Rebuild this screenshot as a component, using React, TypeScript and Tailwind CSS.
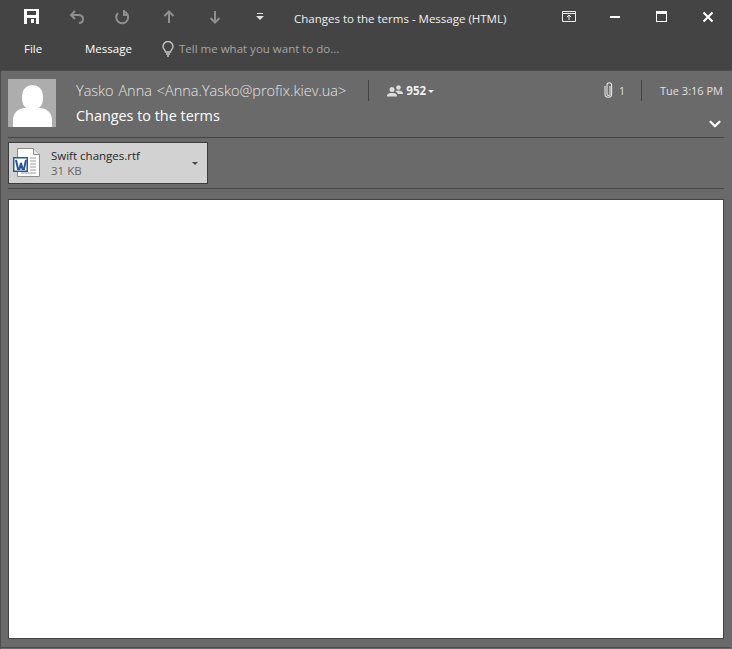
import { ChevronDown } from 'lucide-react';

function SaveIcon() {
  return (
    <svg width="15" height="15" viewBox="0 0 15 15" className="text-white">
      <path fill="currentColor" fillRule="evenodd" d="M0 0h15v15H0zM3 2v4h9V2zM3 9v6h9V9zM7 10h3v4H7z" />
    </svg>
  );
}

function ToolbarIcons() {
  return (
    <div className="flex items-center">
      <div className="mb-[1px] w-[39px] pl-[24px]"><SaveIcon /></div>
      <svg width="16" height="14" viewBox="0 0 16 14" className="ml-[30px] text-[#8f8f8f]" fill="none" stroke="currentColor" strokeWidth="2">
        <path d="M6 1 2 5l4 4M2 5h7c3 0 5 1.500 5 4s-1.500 4-4 4" />
      </svg>
      <svg width="16" height="16" viewBox="0 0 16 16" className="ml-[29px] text-[#8f8f8f]" fill="none" stroke="currentColor" strokeWidth="2">
        <path d="M10 2.500A6 6 0 1 1 4 4M10 1v5h4" />
      </svg>
      <svg width="12" height="14" viewBox="0 0 12 14" className="ml-[33px] text-[#8f8f8f]" fill="none" stroke="currentColor" strokeWidth="2">
        <path d="M1.500 6 6 1.500 10.500 6M6 2v11" />
      </svg>
      <svg width="12" height="14" viewBox="0 0 12 14" className="ml-[34px] text-[#8f8f8f]" fill="none" stroke="currentColor" strokeWidth="2">
        <path d="M1.500 8 6 12.500 10.500 8M6 12V1" />
      </svg>
      <svg width="8" height="8" viewBox="0 0 8 8" className="ml-[35px] text-[#e0e0e0]" fill="currentColor">
        <path d="M1 0h6v1H1zM0 3h8L4 7z" />
      </svg>
    </div>
  );
}

function WindowButtons() {
  return (
    <div className="flex items-center">
      <svg width="14" height="11" viewBox="0 0 14 11" fill="none" stroke="#eee">
        <path d="M.5.500h13v10H.5zM.5 2.500h13" />
        <path d="M7 9V4M5 6l2-2 2 2" />
      </svg>
      <div className="ml-[34px] h-[2px] w-[10px] bg-white" />
      <div className="ml-[36px] h-[11px] w-[11px] border border-t-[3px] border-white" />
      <svg width="12" height="12" viewBox="0 0 12 12" className="ml-[35px] mr-[18px]" stroke="white" strokeWidth="2">
        <path d="M1.500 1.500l9 9M10.500 1.500l-9 9" />
      </svg>
    </div>
  );
}

function WordIcon() {
  return (
    <svg width="32" height="32" viewBox="0 0 32 32" className="shrink-0">
      <path d="M5.500 1.500h16l6 6v22h-22z" fill="white" stroke="#8c8c8c" />
      <path d="M21.500 1.500v6h6" fill="#e8e8e8" stroke="#8c8c8c" />
      <path d="M18 11h6M18 14h6M18 17h6M18 20h6M18 23h6M9 26h15" stroke="#9a9a9a" />
      <rect x="1" y="10" width="15" height="15" fill="#2b579a" />
      <rect x="2.500" y="11.500" width="12" height="12" fill="white" />
      <path d="M4 13l2 9h1.500L9 16l1.500 6H12l2-9" fill="none" stroke="#2b579a" strokeWidth="2" />
    </svg>
  );
}

function ClipIcon() {
  return (
    <svg width="9" height="16" viewBox="0 0 9 16" fill="none" stroke="#e6e6e6" strokeWidth="1.100" className="mt-[-2px]">
      <path d="M6 4v8a1.500 1.500 0 0 1-3 0V3a2.300 2.300 0 0 1 4.600 0v9a3.300 3.300 0 0 1-6.600 0V4" />
    </svg>
  );
}

export default function App() {
  return (
    <div className="flex h-[649px] w-[732px] flex-col overflow-hidden bg-[#6a6a6a] font-['Open_Sans','Noto_Sans',sans-serif] text-white">
      {/* title bar + ribbon tabs */}
      <div className="flex h-[70px] flex-col bg-[#444444]">
        <div className="relative flex h-[32px] items-center justify-between pt-[1px]">
          <ToolbarIcons />
          <span className="absolute left-[294px] top-[10px] text-[11.5px] leading-[18px] text-[#f0f0f0]">
            Changes to the terms - Message (HTML)
          </span>
          <WindowButtons />
        </div>
        <div className="flex h-[34px] items-center text-[11.5px] text-white">
          <span className="ml-[24px] w-[61px] font-medium">File</span>
          <span className="w-[77px] font-medium">Message</span>
          <svg width="12" height="16" viewBox="0 0 12 16" fill="none" stroke="#c8c8c8" strokeWidth="1.300">
            <path d="M3.500 11C3.500 9 1 8 1 5.500a5 5 0 0 1 10 0C11 8 8.500 9 8.500 11zM4 13h4M5 15h2" />
          </svg>
          <span className="ml-[5px] text-[#a6a6a6]">Tell me what you want to do...</span>
        </div>
      </div>

      <div className="flex flex-1 flex-col border border-b-0 border-[#4c4c4c] border-r-[#6a6a6a]">
        {/* message header */}
        <div className="ml-[7px] mr-[7px] mt-[8px] flex h-[59px] items-start border-b border-[#444444]">
          <div className="relative h-[48px] w-[48px] shrink-0 overflow-hidden bg-[#adadad]">
            <div className="absolute left-[14px] top-[6px] h-[25px] w-[21px] rounded-full bg-white" />
            <div className="absolute left-[5px] top-[29px] h-[24px] w-[39px] rounded-t-[12px] bg-white" />
          </div>
          <div className="ml-[20px] flex flex-1 flex-col">
            <div className="flex h-[24px] items-center">
              <span className="text-[14.5px] font-light leading-[20px] text-[#e4e4e4] [word-spacing:1px]">Yasko Anna &lt;Anna.Yasko@profix.kiev.ua&gt;</span>
              <div className="ml-[22px] mt-[-2px] h-[21px] w-px bg-[#444444]" />
              <svg width="16" height="12" viewBox="0 0 16 12" fill="#dddddd" className="ml-[18px]">
                <circle cx="5" cy="4.500" r="2.500" />
                <path d="M0 11.500C0 8.500 2 8 5 8s5 .5 5 3.500z" />
                <circle cx="11.500" cy="2.500" r="2.300" />
                <path d="M8 6c2-.8 7-1 8 2v1h-5c-.5-1.500-2-2.500-3-3z" />
              </svg>
              <span className="ml-[3px] text-[11.5px] font-bold text-[#eeeeee]">952</span>
              <div className="ml-[2px] mt-[1px] h-0 w-0 border-x-[3px] border-t-[3px] border-x-transparent border-t-[#eeeeee]" />
              <div className="flex-1" />
              <ClipIcon />
              <span className="ml-[6px] mt-[1px] text-[10.500px] text-[#e0e0e0]">1</span>
              <div className="ml-[16px] mt-[-2px] h-[21px] w-px bg-[#444444]" />
              <span className="ml-[18px] mr-[1px] text-[11px] text-[#e0e0e0]">Tue 3:16 PM</span>
            </div>
            <div className="mt-[2px] flex h-[22px] items-center justify-between">
              <span className="text-[14.4px] font-medium leading-[20px] text-white">Changes to the terms</span>
              <ChevronDown size={18} strokeWidth={3} className="mt-[15px] text-white" />
            </div>
          </div>
        </div>

        {/* attachment */}
        <div className="ml-[7px] mr-[7px] flex h-[51px] items-start border-b border-[#444444] pt-[4px]">
          <div className="flex h-[42px] w-[200px] items-center border border-[#3c3c3c] bg-[#d2d2d2] pl-[3px]">
            <WordIcon />
            <div className="ml-[7px] flex flex-1 flex-col leading-[15px]">
              <span className="text-[11.5px] text-[#262626]">Swift changes.rtf</span>
              <span className="text-[11.5px] text-[#666666]">31 KB</span>
            </div>
            <div className="mr-[9px] h-0 w-0 border-x-[3px] border-t-[3px] border-x-transparent border-t-[#444444]" />
          </div>
        </div>

        {/* message body */}
        <div className="ml-[7px] mr-[7px] mt-[10px] h-[440px] border border-[#444444] bg-white" />
        <div className="mt-[8px] h-px bg-[#4c4c4c]" />
      </div>
    </div>
  );
}
